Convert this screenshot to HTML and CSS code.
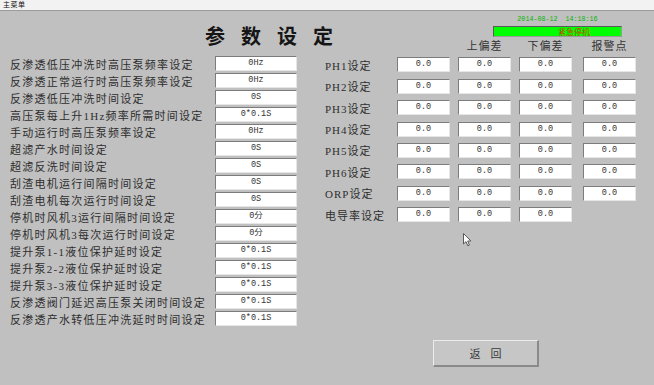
FILE: index.html
```html
<!DOCTYPE html>
<html>
<head>
    <title>参数设定</title>
    <link rel="stylesheet" href="styles.css">
</head>
<body>
    <div class="titlebar">主菜单</div>
    <div class="top">
        <h1 class="title">参数设定</h1>
        <div class="status">
            <div class="clock">2014-08-12&nbsp;&nbsp;14:18:16</div>
            <div class="alarm-bar">紧急停机</div>
        </div>
    </div>
    <div class="content">
        <div class="params">
            <div class="param"><span class="label">反渗透低压冲洗时高压泵频率设定</span><span class="field">0Hz</span></div>
            <div class="param"><span class="label">反渗透正常运行时高压泵频率设定</span><span class="field">0Hz</span></div>
            <div class="param"><span class="label">反渗透低压冲洗时间设定</span><span class="field">0S</span></div>
            <div class="param"><span class="label">高压泵每上升1Hz频率所需时间设定</span><span class="field">0*0.1S</span></div>
            <div class="param"><span class="label">手动运行时高压泵频率设定</span><span class="field">0Hz</span></div>
            <div class="param"><span class="label">超滤产水时间设定</span><span class="field">0S</span></div>
            <div class="param"><span class="label">超滤反洗时间设定</span><span class="field">0S</span></div>
            <div class="param"><span class="label">刮渣电机运行间隔时间设定</span><span class="field">0S</span></div>
            <div class="param"><span class="label">刮渣电机每次运行时间设定</span><span class="field">0S</span></div>
            <div class="param"><span class="label">停机时风机3运行间隔时间设定</span><span class="field">0分</span></div>
            <div class="param"><span class="label">停机时风机3每次运行时间设定</span><span class="field">0分</span></div>
            <div class="param"><span class="label">提升泵1-1液位保护延时设定</span><span class="field">0*0.1S</span></div>
            <div class="param"><span class="label">提升泵2-2液位保护延时设定</span><span class="field">0*0.1S</span></div>
            <div class="param"><span class="label">提升泵3-3液位保护延时设定</span><span class="field">0*0.1S</span></div>
            <div class="param"><span class="label">反渗透阀门延迟高压泵关闭时间设定</span><span class="field">0*0.1S</span></div>
            <div class="param"><span class="label">反渗透产水转低压冲洗延时时间设定</span><span class="field">0*0.1S</span></div>
        </div>

        <div class="ph-table">
            <span></span><span></span>
            <span class="head">上偏差</span><span class="head">下偏差</span><span class="head alarm">报警点</span>

            <span class="label">PH1设定</span>
            <span class="field">0.0</span><span class="field">0.0</span><span class="field">0.0</span><span class="field alarm">0.0</span>
            <span class="label">PH2设定</span>
            <span class="field">0.0</span><span class="field">0.0</span><span class="field">0.0</span><span class="field alarm">0.0</span>
            <span class="label">PH3设定</span>
            <span class="field">0.0</span><span class="field">0.0</span><span class="field">0.0</span><span class="field alarm">0.0</span>
            <span class="label">PH4设定</span>
            <span class="field">0.0</span><span class="field">0.0</span><span class="field">0.0</span><span class="field alarm">0.0</span>
            <span class="label">PH5设定</span>
            <span class="field">0.0</span><span class="field">0.0</span><span class="field">0.0</span><span class="field alarm">0.0</span>
            <span class="label">PH6设定</span>
            <span class="field">0.0</span><span class="field">0.0</span><span class="field">0.0</span><span class="field alarm">0.0</span>
            <span class="label">ORP设定</span>
            <span class="field">0.0</span><span class="field">0.0</span><span class="field">0.0</span><span class="field alarm">0.0</span>
            <span class="label">电导率设定</span>
            <span class="field">0.0</span><span class="field">0.0</span><span class="field">0.0</span>
        </div>
    </div>
    <div class="footer">
        <button class="back">返回</button>
    </div>

    <svg class="cursor" width="10" height="14" viewBox="0 0 10 14">
        <path d="M0.5 0.5 L0.5 11 L3 8.6 L4.8 12.8 L6.4 12.1 L4.7 8 L8 8 Z" fill="#ffffff" stroke="#5a5a5a" stroke-width="1"/>
    </svg>
</body>
</html>
```

FILE: styles.css
```css
body {
    margin: 0;
    width: 654px;
    height: 385px;
    overflow: hidden;
    position: relative;
    background-color: #c0c0c0;
    font-family: "Liberation Serif", "Noto Sans CJK SC", sans-serif;
    color: #2e2e2e;
}
.titlebar {
    height: 10px;
    line-height: 10px;
    padding-left: 3px;
    font-size: 7px;
    letter-spacing: 0.5px;
    color: #111;
    background: #f2f2f2;
    border-bottom: 1px solid #9c9c9c;
}
.top {
    display: flex;
    height: 31px;
}
.title {
    margin: 16px 0 0 205px;
    font-size: 20px;
    line-height: 20px;
    font-weight: bold;
    letter-spacing: 16px;
    color: #151515;
    white-space: nowrap;
}
.status {
    margin-left: auto;
    margin-right: 32px;
    padding-top: 4px;
    width: 129px;
}
.clock {
    font-family: "Liberation Mono", monospace;
    font-size: 6.7px;
    line-height: 9px;
    height: 9px;
    text-align: center;
    color: #00b400;
    white-space: nowrap;
}
.alarm-bar {
    margin-top: 2px;
    height: 9px;
    line-height: 9px;
    padding-left: 64px;
    font-family: "Noto Sans CJK SC", sans-serif;
    font-size: 8px;
    color: #c83c00;
    background: #00ff00;
    border: 1px solid;
    border-color: #5a5a5a #9a9a9a #9a9a9a #5a5a5a;
}
.content {
    display: flex;
    gap: 28px;
}
.params {
    padding: 14px 0 0 10px;
    display: flex;
    flex-direction: column;
    gap: 2px;
}
.param {
    display: flex;
    align-items: center;
    height: 15px;
}
.label {
    font-size: 11px;
    letter-spacing: 1.25px;
    white-space: nowrap;
}
.param .label {
    width: 205px;
}
.field {
    box-sizing: border-box;
    height: 15px;
    line-height: 13px;
    text-align: center;
    font-family: "Liberation Mono", "Noto Sans CJK SC", monospace;
    font-size: 8.5px;
    color: #333;
    background: #ffffff;
    border: 1px solid;
    border-color: #7c7c7c #e6e6e6 #e6e6e6 #7c7c7c;
}
.param .field {
    width: 82px;
}
.ph-table {
    display: grid;
    grid-template-columns: 64px 53px 53px 53px 56px;
    grid-template-rows: 9px;
    grid-auto-rows: 15px;
    column-gap: 8px;
    row-gap: 6.4px;
    align-items: center;
}
.ph-table .label {
    letter-spacing: 1px;
}
.ph-table .head {
    font-size: 11px;
    line-height: 9px;
    letter-spacing: 1px;
    text-align: center;
    color: #333;
}
.ph-table .alarm {
    justify-self: end;
    width: 53px;
}
.ph-table .field {
    width: 53px;
}
.footer {
    margin-top: 14px;
    padding-left: 433px;
}
.back {
    width: 106px;
    height: 27px;
    padding: 0;
    font-family: "Noto Sans CJK SC", sans-serif;
    font-size: 11px;
    letter-spacing: 10px;
    text-indent: 10px;
    color: #3a3a3a;
    background: #c6c6c6;
    border: 2px solid;
    border-color: #ececec #8a8a8a #8a8a8a #ececec;
    border-top-width: 1px;
    border-left-width: 1px;
}
.cursor {
    position: absolute;
    left: 463px;
    top: 233px;
}
```
